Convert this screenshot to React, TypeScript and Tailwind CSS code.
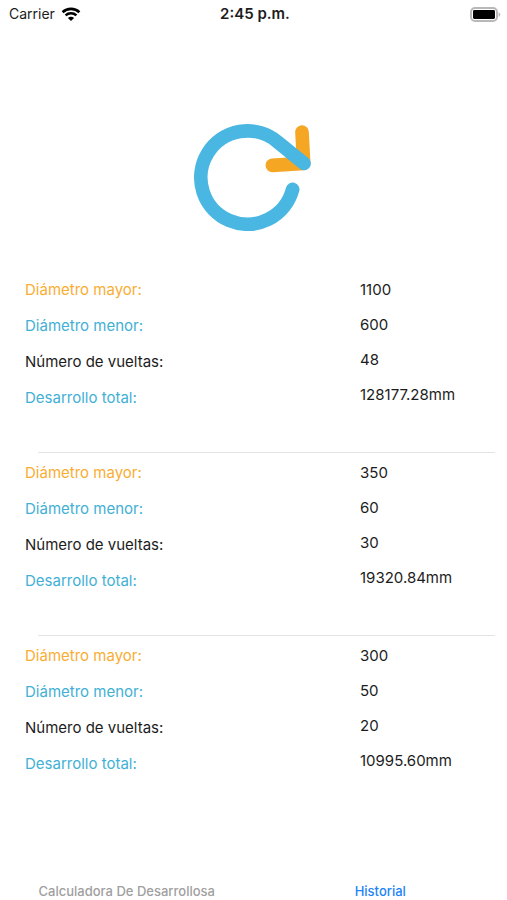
import React from "react"

const labels = [
  { text: "Diámetro mayor:", color: "text-[#f9ad33]" },
  { text: "Diámetro menor:", color: "text-[#42b0d5]" },
  { text: "Número de vueltas:", color: "text-[#1c1c1c]" },
  { text: "Desarrollo total:", color: "text-[#42b0d5]" },
]

const history = [
  ["1100", "600", "48", "128177.28mm"],
  ["350", "60", "30", "19320.84mm"],
  ["300", "50", "20", "10995.60mm"],
]

function WifiIcon() {
  return (
    <svg width="20" height="15" viewBox="0 0 20 15" fill="none" stroke="#000" strokeWidth="2.6" aria-hidden="true">
      <path d="M1.6 5.2C6.2 0.7 13.8 0.7 18.4 5.2" />
      <path d="M4.6 8.4C7.5 5.6 12.5 5.6 15.4 8.4" />
      <path d="M10 14L6.9 10.9C8.7 9.3 11.3 9.3 13.1 10.9Z" fill="#000" stroke="none" />
    </svg>
  )
}

function BatteryIcon() {
  return (
    <svg width="31" height="15" viewBox="0 0 31 15" aria-hidden="true">
      <rect x="1" y="1" width="26" height="13" rx="4" fill="#fff" stroke="#b8b8b8" strokeWidth="2" />
      <rect x="3" y="3" width="22" height="9" rx="1.4" fill="#000" />
      <path d="M28.6 5.2C30.8 6 30.8 9 28.6 9.8Z" fill="#b8b8b8" />
    </svg>
  )
}

function Logo() {
  return (
    <svg
      width="117"
      height="108"
      viewBox="42 40 351 324"
      fill="none"
      strokeWidth="41"
      strokeLinecap="round"
      strokeLinejoin="round"
      role="img"
      aria-label="Calculadora De Desarrollos"
    >
      <path d="M366 67L371 161L277 167" stroke="#f5a623" />
      <path d="M338 239A140 140 0 1 1 292 96L372 161" stroke="#4ab6e2" />
    </svg>
  )
}

function HistoryEntry({ values }: { values: string[] }) {
  return (
    <li className="group">
      <div className="grid grid-cols-[335fr_147fr] pl-[25px] pt-[2px] pb-[36px] text-[15px]">
        <ul>
          {labels.map((label) => (
            <li key={label.text} className={`h-9 leading-9 ${label.color}`}>
              {label.text}
            </li>
          ))}
        </ul>
        <ul className="text-[#1c1c1c]">
          {values.map((value, i) => (
            <li key={i} className="h-[35px] leading-[35px]">
              {value}
            </li>
          ))}
        </ul>
      </div>
      <hr className="ml-[38px] mr-3 border-[#e4e4e4] group-last:hidden" />
    </li>
  )
}

export default function App() {
  return (
    <div className="flex min-h-screen flex-col bg-white font-['Inter',sans-serif]">
      <header className="grid h-7 grid-cols-[1fr_auto_1fr] items-center pl-[9px] pr-[6px] text-[#1c1c1c]">
        <span className="flex items-center gap-[6px] text-sm">
          Carrier
          <WifiIcon />
        </span>
        <span className="text-[15px] font-semibold">2:45 p.m.</span>
        <span className="justify-self-end">
          <BatteryIcon />
        </span>
      </header>

      <main className="flex-1">
        <div className="flex justify-center pr-[2px] pt-[95px] pb-[39px]">
          <Logo />
        </div>
        <ul>
          {history.map((values, i) => (
            <HistoryEntry key={i} values={values} />
          ))}
        </ul>
      </main>

      <nav className="grid grid-cols-2 text-[13px] leading-[18px] font-medium">
        <a href="#calculadora" className="text-center text-[#a0a0a0]">
          Calculadora De Desarrollosa
        </a>
        <a href="#historial" aria-current="page" className="text-center text-[#1d84f5]">
          Historial
        </a>
      </nav>
    </div>
  )
}
